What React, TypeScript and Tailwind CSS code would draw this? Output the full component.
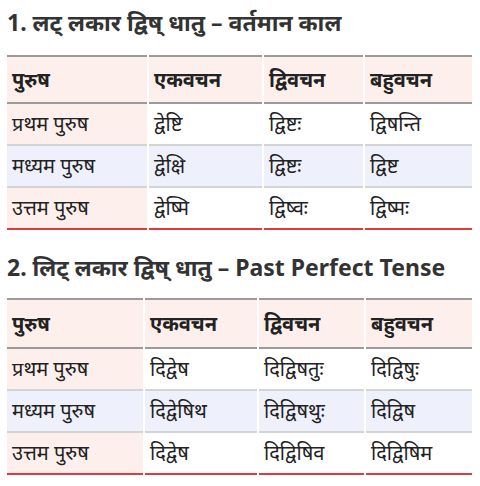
import React from "react";

type Row = [string, string, string, string];

const font = { fontFamily: '"Noto Sans", "Noto Sans Devanagari", "Lato", sans-serif' };

function Table({ rows, widths, headH }: { rows: Row[]; widths: number[]; headH: string }) {
  const head: Row = ["पुरुष", "एकवचन", "द्विवचन", "बहुवचन"];
  return (
    <table className="w-[469px] ml-[5px] border-separate border-spacing-x-[2px] border-spacing-y-0 text-[20px] text-[#222]">
      <thead>
        <tr>
          {head.map((h, i) => (
            <th
              key={i}
              style={{ width: widths[i] }}
              className={`bg-[#fdf0ec] border-t-2 border-b-2 border-[#9a9a9a] ${headH} px-[5px] text-left font-bold leading-none`}
            >
              {h}
            </th>
          ))}
        </tr>
      </thead>
      <tbody>
        {rows.map((r, ri) => (
          <tr key={ri}>
            {r.map((c, ci) => {
              const bg =
                ri === 1 ? "bg-[#eef0fb]" : ci === 0 ? "bg-[#fdf0ec]" : "bg-white";
              const border =
                ri === rows.length - 1
                  ? "border-b-2 border-[#e0393e]"
                  : "border-b-2 border-[#d4d4d4]";
              return (
                <td key={ci} className={`${bg} ${border} h-[42px] px-[5px] text-left font-normal leading-none`}>
                  {c}
                </td>
              );
            })}
          </tr>
        ))}
      </tbody>
    </table>
  );
}

export default function App() {
  const t1: Row[] = [
    ["प्रथम पुरुष", "द्वेष्टि", "द्विष्टः", "द्विषन्ति"],
    ["मध्यम पुरुष", "द्वेक्षि", "द्विष्टः", "द्विष्ट"],
    ["उत्तम पुरुष", "द्वेष्मि", "द्विष्वः", "द्विष्मः"],
  ];
  const t2: Row[] = [
    ["प्रथम पुरुष", "दिद्वेष", "दिद्विषतुः", "दिद्विषुः"],
    ["मध्यम पुरुष", "दिद्वेषिथ", "दिद्विषथुः", "दिद्विष"],
    ["उत्तम पुरुष", "दिद्वेष", "दिद्विषिव", "दिद्विषिम"],
  ];
  return (
    <div className="w-[480px] h-[486px] bg-white overflow-hidden" style={font}>
      <h2 className="pt-[6px] pl-[7px] text-[23px] font-bold text-[#333] leading-[32px]">
        1. लट् लकार द्विष् धातु – वर्तमान काल
      </h2>
      <div className="mt-[17px]">
        <Table rows={t1} widths={[140, 113, 99, 107]} headH="h-[49px]" />
      </div>
      <h2 className="mt-[21px] pl-[7px] text-[23px] font-bold text-[#333] leading-[32px]">
        2. लिट् लकार द्विष् धातु – Past Perfect Tense
      </h2>
      <div className="mt-[15px]">
        <Table rows={t2} widths={[136, 112, 105, 106]} headH="h-[51px]" />
      </div>
    </div>
  );
}
